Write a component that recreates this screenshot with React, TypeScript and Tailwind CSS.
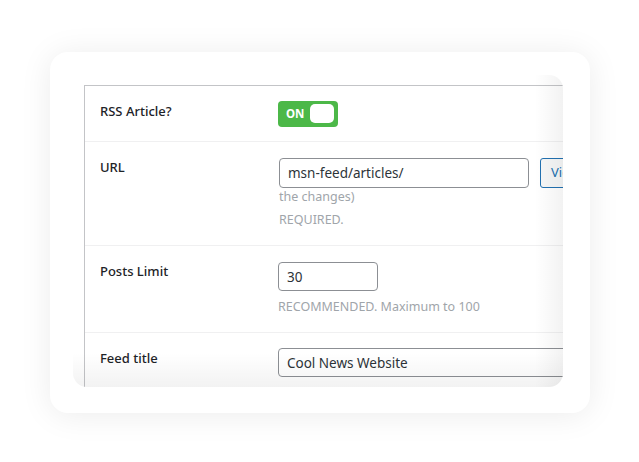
export default function App() {
  const label = "w-[193px] shrink-0 pl-[15px] pt-[15px] text-[13px] leading-[20px] font-medium text-[#1d2327]";
  const help = "text-[12.5px] leading-[18px] text-[#a0a5aa]";
  const input =
    "block h-[29px] rounded-[4px] border border-[#8c8f94] px-[8px] text-[13.5px] text-[#2c3338] outline-none bg-white";
  return (
    <div className="w-[639px] h-[462px] bg-white pt-[52px] pl-[50px] font-['Noto_Sans',sans-serif] text-[#1d2327]">
      <div className="w-[540px] h-[361px] bg-white rounded-[18px] shadow-[0_2px_32px_rgba(0,0,0,0.08)] pt-[23px] pl-[23px]">
        <div className="relative w-[490px] h-[312px] rounded-[14px] overflow-hidden bg-white pt-[10px] pl-[11px]">
          <div className="w-[620px] border-l border-t border-[#c3c4c7] bg-white">
            {/* Row 1 */}
            <div className="flex border-b border-[#f0f0f1]">
              <div className={label}>RSS Article?</div>
              <div className="pt-[15px] pb-[14px]">
                <div className="w-[60px] h-[26px] rounded-[4px] bg-[#4cb848] flex items-center justify-between pl-[8px] pr-[4px]">
                  <span className="text-white text-[11.5px] font-bold leading-none">ON</span>
                  <span className="w-[24px] h-[19px] rounded-[5px] bg-white mt-[-1px]" />
                </div>
              </div>
            </div>
            {/* Row 2 */}
            <div className="flex border-b border-[#f0f0f1]">
              <div className={label}>URL</div>
              <div className="pt-[16px] pb-[16px] pl-[1px]">
                <div className="flex items-center gap-[11px]">
                  <input readOnly defaultValue="msn-feed/articles/" className={`${input} w-[250px] h-[30px]`} />
                  <button className="h-[30px] px-[10px] rounded-[3px] border border-[#2271b1] bg-[#f6f7f7] text-[13px] text-[#2271b1] whitespace-nowrap">
                    View
                  </button>
                </div>
                <div className={help}>the changes)</div>
                <div className={`mt-[5px] ${help}`}>REQUIRED.</div>
              </div>
            </div>
            {/* Row 3 */}
            <div className="flex border-b border-[#f0f0f1]">
              <div className={label}>Posts Limit</div>
              <div className="pt-[16px] pb-[16px]">
                <input readOnly defaultValue="30" className={`${input} w-[100px]`} />
                <div className={`mt-[7px] ${help}`}>RECOMMENDED. Maximum to 100</div>
              </div>
            </div>
            {/* Row 4 */}
            <div className="flex">
              <div className={label}>Feed title</div>
              <div className="pt-[15px] pb-[16px]">
                <input readOnly defaultValue="Cool News Website" className={`${input} w-[350px]`} />
              </div>
            </div>
          </div>
          <div className="pointer-events-none absolute top-0 right-0 h-full w-[28px] bg-gradient-to-r from-transparent to-black/[0.05]" />
          <div className="pointer-events-none absolute bottom-0 left-0 w-full h-[34px] bg-gradient-to-b from-transparent to-black/[0.05]" />
        </div>
      </div>
    </div>
  );
}
